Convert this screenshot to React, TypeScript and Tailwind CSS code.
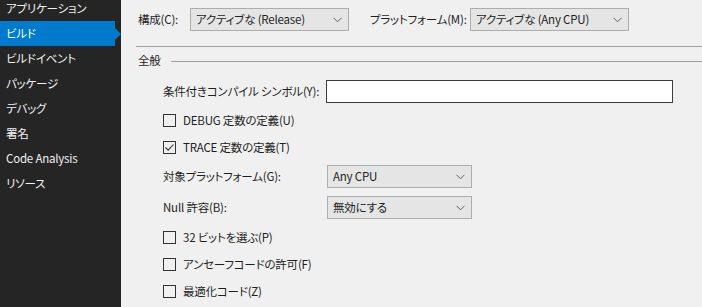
import React from 'react';

const navItems = ['アプリケーション', 'ビルド', 'ビルドイベント', 'パッケージ', 'デバッグ', '署名', 'Code Analysis', 'リソース'];

const Chevron: React.FC = () => (
  <svg width="9" height="6" viewBox="0 0 9 6" className="shrink-0">
    <polyline points="0.5,0.8 4.5,4.8 8.5,0.8" fill="none" stroke="#5f5f5f" strokeWidth="1" />
  </svg>
);

const Select: React.FC<{ value: string; width: string }> = ({ value, width }) => (
  <div className={`${width} h-[23px] shrink-0 bg-[#e5e5e5] border border-[#adadad] flex items-center justify-between pl-[5px] pr-[6px] text-[#1e1e1e]`}>
    <span>{value}</span>
    <Chevron />
  </div>
);

const Checkbox: React.FC<{ label: string; checked?: boolean }> = ({ label, checked }) => (
  <div className="h-[27px] flex items-center gap-[7px]">
    <div className="w-[13px] h-[13px] shrink-0 border border-[#333333] bg-[#f0f0f0] flex items-center justify-center">
      {checked && (
        <svg width="11" height="11" viewBox="0 0 11 11">
          <polyline points="1.5,5.5 4.2,8.2 9.5,2.5" fill="none" stroke="#333333" strokeWidth="1.1" />
        </svg>
      )}
    </div>
    <span>{label}</span>
  </div>
);

export default function App() {
  return (
    <div
      className="w-[702px] h-[307px] overflow-hidden flex text-[11.5px] tracking-[-0.2px] leading-none whitespace-nowrap [font-feature-settings:'palt']"
      style={{ fontFamily: '"Noto Sans CJK JP", "Noto Sans", sans-serif' }}
    >
      {/* sidebar */}
      <div className="w-[121px] shrink-0 bg-[#252526] text-[#f1f1f1]">
        <div className="-mt-[4px] flex flex-col">
          {navItems.map((item, i) =>
            i === 1 ? (
              <div key={item} className="h-[25px] flex items-center">
                <div className="w-[115px] h-full bg-[#007acc] flex items-center pl-[6px] text-white">{item}</div>
                <div className="w-0 h-0 border-y-[6px] border-y-transparent border-l-[6px] border-l-[#007acc]" />
              </div>
            ) : (
              <div key={item} className="h-[25px] flex items-center pl-[6px]">{item}</div>
            )
          )}
        </div>
      </div>

      {/* content */}
      <div className="flex-1 min-w-0 bg-[#f0f0f0] text-[#1e1e1e] pl-[17px]">
        <div className="pt-[8px] flex items-center">
          <span className="w-[52px] shrink-0">構成(C):</span>
          <Select value="アクティブな (Release)" width="w-[159px]" />
          <span className="ml-[21px] w-[100px] shrink-0">プラットフォーム(M):</span>
          <Select value="アクティブな (Any CPU)" width="w-[159px]" />
        </div>

        <div className="mt-[15px] -ml-[2px] h-px bg-[#a0a0a0]" />

        <div className="mt-[4px] h-[20px] flex items-center gap-[10px]">
          <span>全般</span>
          <div className="flex-1 h-px bg-[#a0a0a0]" />
        </div>

        <div className="pl-[25px]">
          <div className="mt-[9px] h-[23px] flex items-center">
            <span className="w-[163px] shrink-0">条件付きコンパイル シンボル(Y):</span>
            <div className="w-[347px] h-[23px] shrink-0 bg-white border border-[#3c3c3c]" />
          </div>

          <div className="mt-[4px]">
            <Checkbox label="DEBUG 定数の定義(U)" />
            <Checkbox label="TRACE 定数の定義(T)" checked />
          </div>

          <div className="mt-[4px] flex items-center">
            <span className="w-[164px] shrink-0">対象プラットフォーム(G):</span>
            <Select value="Any CPU" width="w-[145px]" />
          </div>

          <div className="mt-[8px] flex items-center">
            <span className="w-[164px] shrink-0">Null 許容(B):</span>
            <Select value="無効にする" width="w-[145px]" />
          </div>

          <div className="mt-[5px]">
            <Checkbox label="32 ビットを選ぶ(P)" />
            <Checkbox label="アンセーフコードの許可(F)" />
            <Checkbox label="最適化コード(Z)" />
          </div>
        </div>
      </div>
    </div>
  );
}
